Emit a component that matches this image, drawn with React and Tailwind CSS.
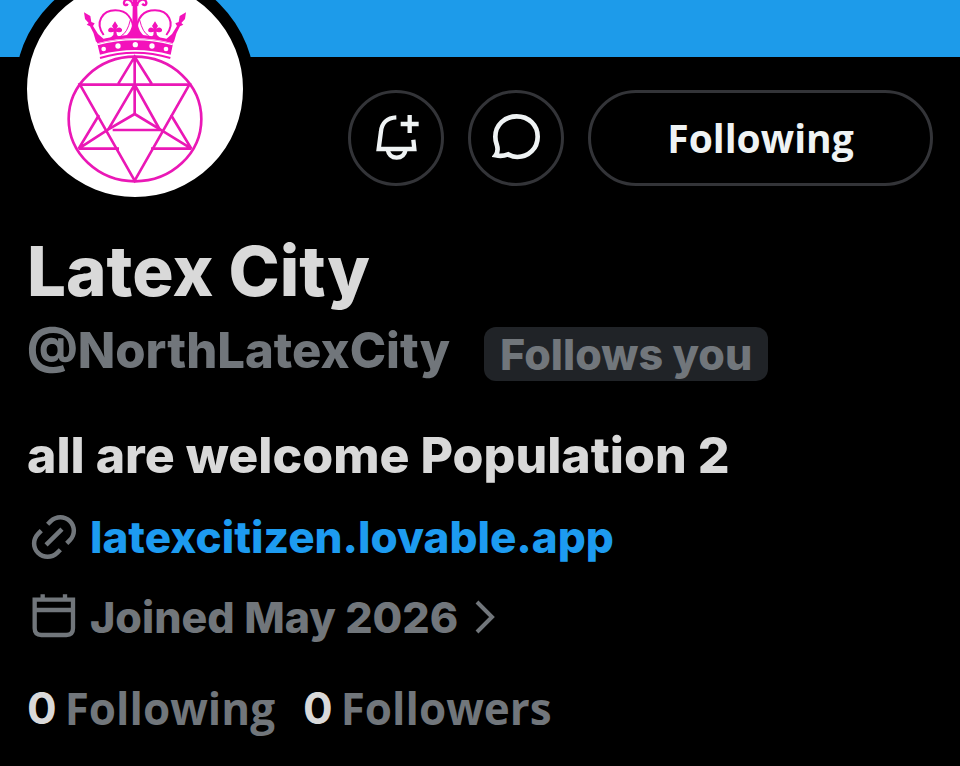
import React, { useState } from "react";

const Emblem = () => (
  <svg viewBox="81 -57 648 648" className="w-full h-full" fill="none" stroke="#ea18b6" strokeWidth="8">
    <ellipse cx="405" cy="357" rx="199" ry="187" />
    {/* star */}
    <path d="M355 251L404 170L455 251M404 170V342M240 254H568L404 542ZM325 388L404 254L480 390M338 390H482" />
    <path d="M404 342L325 388L236 446L297 345M236 446H357M404 342L480 388L574 446L513 345M574 446H453" />
    {/* crown */}
    <g stroke="#f312bb">
      <path d="M300 174Q405 142 511 174" strokeWidth="6" />
      <path d="M292 131Q405 101 519 131L512 164Q405 136 300 164Z" fill="#f312bb" stroke="none" />
      <path d="M288 122Q405 88 522 122L519 130Q405 100 292 130Z" fill="#f312bb" stroke="none" />
      <path d="M292 134Q405 104 518 134" stroke="#fff" strokeWidth="4" />
      <path d="M311 105C283 68 307 31 346 31C383 31 399 58 401 94M499 105C528 68 504 31 465 31C427 31 411 58 409 94" strokeWidth="6" />
      <path d="M391 60Q382 98 364 107M419 60Q428 98 446 107" strokeWidth="3" />
      <g fill="#f312bb" stroke="none">
        <path d="M399 -10H411L413 70Q415 96 437 112H373Q395 96 397 70Z" />
        <path d="M405 -50Q420 -24 413 2H397Q390 -24 405 -50ZM397 10H413V18H397Z" />
        <path d="M345 64L354 78L349 86Q360 78 366 88Q368 98 356 97L349 95L351 105L363 116H328L340 105L341 95L334 97Q322 98 325 88Q330 78 341 86L336 78Z" />
        <path d="M465 64L474 78L469 86Q480 78 486 88Q488 98 476 97L469 95L471 105L483 116H448L460 105L461 95L454 97Q442 98 445 88Q450 78 461 86L456 78Z" />
        <path d="M252 37L271 48L274 66L284 70L279 78L294 102L312 118L288 125Q283 99 270 79L260 74L266 69L255 57Z" />
        <path d="M558 37L539 48L536 66L526 70L531 78L516 102L498 118L522 125Q527 99 540 79L550 74L544 69L555 57Z" />
      </g>
      <path d="M399 18C396 -4 374 -7 372 8C371 16 380 18 383 11M411 18C414 -4 437 -7 439 8C440 16 431 18 427 11" strokeWidth="7" />
      <g fill="#fff" stroke="none">
        <circle cx="311" cy="147" r="7" />
        <circle cx="354" cy="138" r="8" />
        <circle cx="406" cy="134" r="8" />
        <circle cx="456" cy="138" r="8" />
        <circle cx="498" cy="147" r="7" />
      </g>
    </g>
  </svg>
);

const BellPlusIcon = () => (
  <svg viewBox="96 102 144 144" className="w-12 h-12" fill="none" stroke="#eff3f4" strokeWidth="13">
    <path d="M169 112C141 113 125 130 123 154L116 207H223L220 179" />
    <path d="M209 105V159M182 132H236" />
    <path d="M143 209C146 225 156 233 170 233S194 225 197 209" />
  </svg>
);

const ChatIcon = () => (
  <svg viewBox="456 102 144 144" className="w-12 h-12" fill="none" stroke="#eff3f4" strokeWidth="14">
    <path d="M530 109C566 109 593 135 593 170S566 231 532 231C522 231 512 228 504 223C492 228 480 229 467 226C473 218 474 205 470 193C467 185 466 178 466 170C466 135 494 109 530 109Z" />
  </svg>
);

const LinkIcon = () => (
  <svg viewBox="0 0 24 24" className="w-[54px] h-[54px]" fill="currentColor">
    <path d="M18.36 5.64c-1.95-1.96-5.11-1.96-7.07 0L9.88 7.05 8.46 5.64l1.42-1.42c2.73-2.73 7.16-2.73 9.9 0 2.73 2.74 2.73 7.17 0 9.9l-1.42 1.42-1.41-1.42 1.41-1.41c1.96-1.96 1.96-5.12 0-7.07zm-2.12 3.53l-7.07 7.07-1.41-1.41 7.07-7.07 1.41 1.41zm-12.02.71l1.42-1.42 1.41 1.42-1.41 1.41c-1.96 1.96-1.96 5.12 0 7.07 1.95 1.96 5.11 1.96 7.07 0l1.41-1.41 1.42 1.41-1.42 1.42c-2.73 2.73-7.16 2.73-9.9 0-2.73-2.74-2.73-7.17 0-9.9z" />
  </svg>
);

const CalendarIcon = () => (
  <svg viewBox="21 270 162 162" className="w-[54px] h-[54px]" fill="none" stroke="currentColor" strokeWidth="13">
    <path d="M44 299H159V385Q159 405 139 405H64Q44 405 44 385ZM44 330H159M68 283V298M135 283V298" />
  </svg>
);

const ChevronIcon = () => (
  <svg viewBox="0 0 20 34" className="w-5 h-[34px]" fill="none" stroke="currentColor" strokeWidth="4">
    <path d="M2 2L17 17L2 32" />
  </svg>
);

const stats = [
  { label: "Following", count: 0 },
  { label: "Followers", count: 0 },
];

const App = () => {
  const [following, setFollowing] = useState(true);

  return (
    <div className="min-h-screen overflow-hidden bg-black text-[#d9d9d9] font-extrabold font-['Inter',sans-serif]">
      <div className="h-[57px] bg-[#1d9bea]"></div>

      <main className="px-[27px]">
        <div className="flex justify-between items-start">
          <div className="-mt-[88px] -ml-3 w-60 h-60 shrink-0 rounded-full border-12 border-black bg-white overflow-hidden">
            <Emblem />
          </div>

          <div className="mt-[33px] flex gap-6">
            <button aria-label="Notifications" className="w-24 h-24 flex items-center justify-center rounded-full border-3 border-[#333438]">
              <BellPlusIcon />
            </button>
            <button aria-label="Message" className="w-24 h-24 flex items-center justify-center rounded-full border-3 border-[#333438]">
              <ChatIcon />
            </button>
            <button
              onClick={() => setFollowing(!following)}
              className="w-[345px] h-24 rounded-full border-3 border-[#333438] text-[#eff3f4] text-[39px] font-bold font-['Open_Sans',sans-serif]"
            >
              {following ? "Following" : "Follow"}
            </button>
          </div>
        </div>

        <h1 className="mt-[22px] text-[69px] leading-[80px]">Latex City</h1>

        <div className="mt-4 flex items-start gap-[34px] text-[#71767b]">
          <span className="text-[49px] leading-[48px]">@NorthLatexCity</span>
          <span className="px-4 rounded-xl bg-[#202327] text-[43px] leading-[54px]">Follows you</span>
        </div>

        <p className="mt-11 text-[50px] leading-[60px]">all are welcome Population 2</p>

        <div className="mt-[25px] flex flex-col items-start gap-[26px] leading-[54px] text-[#71767b]">
          <div className="flex items-center gap-[9px]">
            <LinkIcon />
            <a href="#" className="text-[44px] text-[#1d9bf0]">latexcitizen.lovable.app</a>
          </div>
          <button className="flex items-center gap-[9px]">
            <CalendarIcon />
            <span className="text-[43px]">Joined May 2026</span>
            <span className="ml-2">
              <ChevronIcon />
            </span>
          </button>
        </div>

        <div className="mt-10 flex gap-7 text-[44px] leading-[48px] font-bold font-['Open_Sans',sans-serif]">
          {stats.map((s) => (
            <a key={s.label} href="#" className="flex gap-2">
              <span className="font-['Inter',sans-serif]">{s.count}</span>
              <span className="text-[#71767b]">{s.label}</span>
            </a>
          ))}
        </div>
      </main>
    </div>
  );
};

export default App;
